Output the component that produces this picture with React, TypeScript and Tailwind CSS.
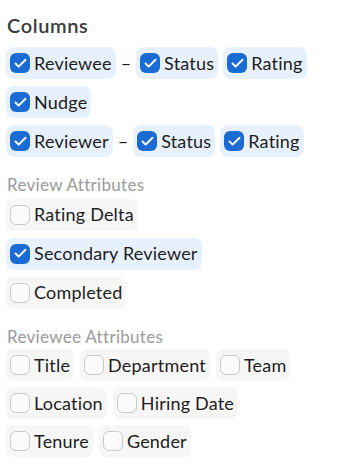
import { Check } from "lucide-react";

interface ChipProps {
  label: string;
  checked?: boolean;
}

function Chip({ label, checked }: ChipProps) {
  return <label
    className={
      checked
        ? "flex h-[32px] items-center gap-[4px] rounded-[8px] bg-[#e7f1fd] pl-[4px] pr-[4px] text-[18px] tracking-[0.2px] text-[#1d1d1f]"
        : "flex h-[32px] items-center gap-[4px] rounded-[8px] bg-[#f6f6f6] pl-[4px] pr-[4px] text-[18px] tracking-[0.2px] text-[#1d1d1f]"
    }
  >
    {checked ? (
      <span className="flex h-[20px] w-[20px] shrink-0 items-center justify-center rounded-[6px] bg-[#1a6bd3]">
        <Check size={15} strokeWidth={3} color="white" />
      </span>
    ) : (
      <span className="h-[20px] w-[20px] shrink-0 rounded-[6px] border border-[#c9c9c9] bg-[#fafafa]" />
    )}
    <span>{label}</span>
  </label>
}

function Dash() {
  return <span className="text-[18px] text-[#1d1d1f]">–</span>
}

export default function App() {
  return <div
    className="flex h-[472px] w-[340px] flex-col bg-white px-[6px] pt-[10px]"
    style={{ fontFamily: "Lato, 'Noto Sans', sans-serif" }}
  >
    <h2 className="mb-[7px] pl-[1px] text-[20px] font-semibold tracking-[0.6px] text-[#3a3a3a]">Columns</h2>
    <div className="flex flex-col gap-[7px]">
      <div className="flex items-center gap-[5px]">
        <Chip label="Reviewee" checked />
        <Dash />
        <Chip label="Status" checked />
        <Chip label="Rating" checked />
      </div>
      <div className="flex items-center gap-[5px]">
        <Chip label="Nudge" checked />
      </div>
      <div className="flex items-center gap-[5px]">
        <Chip label="Reviewer" checked />
        <Dash />
        <Chip label="Status" checked />
        <Chip label="Rating" checked />
      </div>
    </div>
    <p className="mt-[15px] mb-[1px] pl-[1px] text-[17px] tracking-[0.3px] text-[#9a9a9a]">Review Attributes</p>
    <div className="flex flex-col items-start gap-[7px]">
      <Chip label="Rating Delta" />
      <Chip label="Secondary Reviewer" checked />
      <Chip label="Completed" />
    </div>
    <p className="mt-[15px] mb-[0px] pl-[1px] text-[17px] tracking-[0.3px] text-[#9a9a9a]">Reviewee Attributes</p>
    <div className="flex flex-col gap-[6px]">
      <div className="flex items-center gap-[6px]">
        <Chip label="Title" />
        <Chip label="Department" />
        <Chip label="Team" />
      </div>
      <div className="flex items-center gap-[6px]">
        <Chip label="Location" />
        <Chip label="Hiring Date" />
      </div>
      <div className="flex items-center gap-[6px]">
        <Chip label="Tenure" />
        <Chip label="Gender" />
      </div>
    </div>
  </div>
}
